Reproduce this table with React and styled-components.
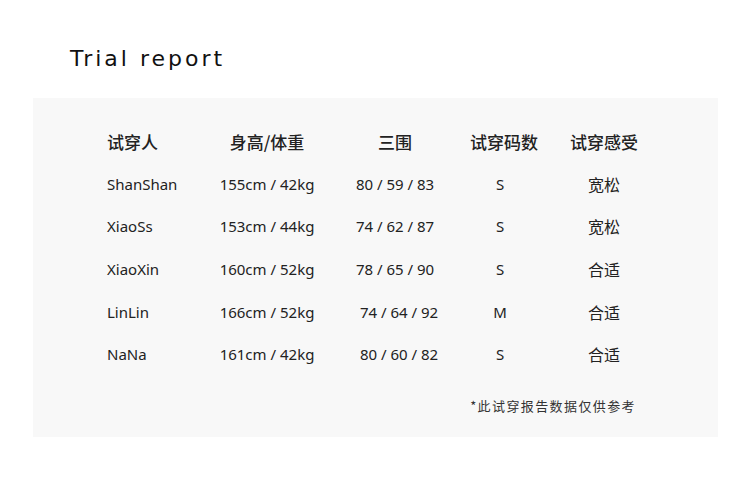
import React from 'react'
import styled, { createGlobalStyle } from 'styled-components'

const GlobalStyle = createGlobalStyle`
  html, body {
    margin: 0;
    padding: 0;
    background: #ffffff;
  }
  body {
    font-family: "Noto Sans", "Noto Sans CJK SC", sans-serif;
    color: #222222;
  }
`

const Page = styled.div`
  width: 750px;
  height: 487px;
  padding: 42px 32px 0 33px;
  box-sizing: border-box;
`

const Title = styled.h1`
  margin: 0 0 0 37px;
  font-family: "DejaVu Sans", sans-serif;
  font-weight: 400;
  font-size: 22px;
  line-height: 34px;
  letter-spacing: 3px;
  color: #111111;
`

const Panel = styled.section`
  margin-top: 22px;
  height: 339px;
  background: #f8f8f8;
  padding: 22px 0 0 74px;
  box-sizing: border-box;
`

const Grid = styled.div`
  display: grid;
  grid-template-columns: 107px 106px 150px 60px 148px;
  grid-auto-rows: 42.6px;
  align-items: center;
`

const Cell = styled.div`
  font-family: ${p => (p.$head || p.$cjk ? '"Noto Sans CJK SC", sans-serif' : 'inherit')};
  font-size: ${p => (p.$head ? '17px' : p.$cjk ? '16px' : '15px')};
  font-weight: ${p => (p.$head ? 500 : 400)};
  text-align: ${p => (p.$left ? 'left' : 'center')};
  color: #222222;
  white-space: nowrap;
  padding-left: ${p => p.$shift || 0}px;
`

const Note = styled.p`
  margin: 20px 0 0;
  width: 529px;
  text-align: right;
  font-family: "Noto Sans CJK SC", sans-serif;
  font-size: 13px;
  letter-spacing: 1.4px;
  color: #333333;
`

const heads = ['试穿人', '身高/体重', '三围', '试穿码数', '试穿感受']

const rows = [
  ['ShanShan', '155cm / 42kg', '80 / 59 / 83', 'S', '宽松', 0],
  ['XiaoSs', '153cm / 44kg', '74 / 62 / 87', 'S', '宽松', 0],
  ['XiaoXin', '160cm / 52kg', '78 / 65 / 90', 'S', '合适', 0],
  ['LinLin', '166cm / 52kg', '74 / 64 / 92', 'M', '合适', 8],
  ['NaNa', '161cm / 42kg', '80 / 60 / 82', 'S', '合适', 8],
]

export default function App() {
  return (
    <>
      <GlobalStyle />
      <Page>
        <Title>Trial report</Title>
        <Panel>
          <Grid>
            {heads.map((h, i) => (
              <Cell key={h} $head $left={i === 0}>{h}</Cell>
            ))}
            {rows.map(r => (
              <React.Fragment key={r[0]}>
                <Cell $left>{r[0]}</Cell>
                <Cell>{r[1]}</Cell>
                <Cell $shift={r[5]}>{r[2]}</Cell>
                <Cell>{r[3]}</Cell>
                <Cell $cjk>{r[4]}</Cell>
              </React.Fragment>
            ))}
          </Grid>
          <Note>*此试穿报告数据仅供参考</Note>
        </Panel>
      </Page>
    </>
  )
}
